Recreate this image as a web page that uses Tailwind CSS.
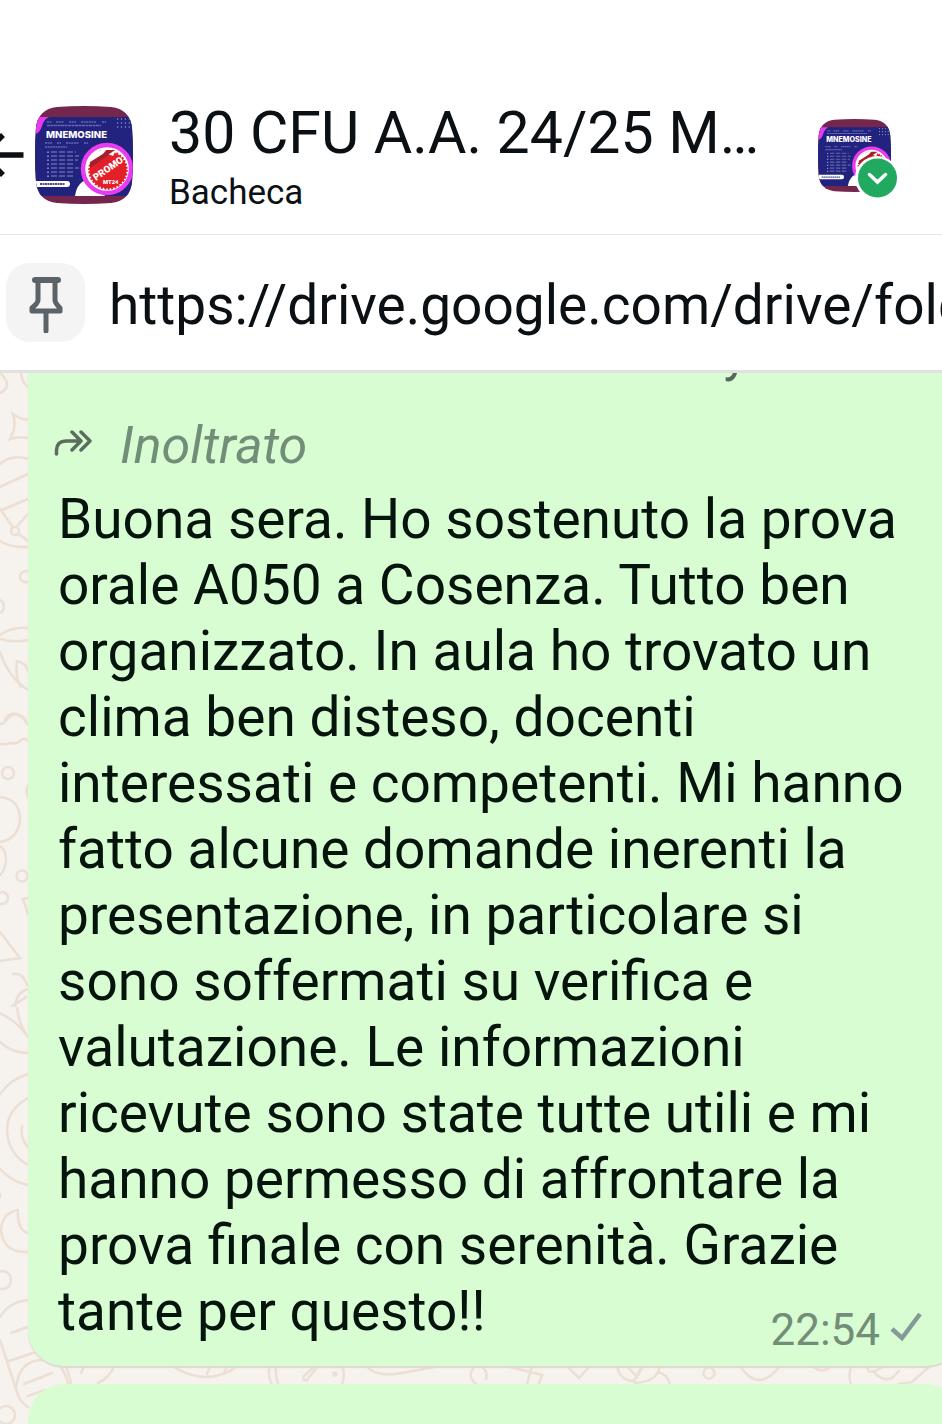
<!DOCTYPE html>
<html lang="it">
<head>
    <meta charset="UTF-8">
    <meta name="viewport" content="width=device-width, initial-scale=1.0">
    <title>30 CFU A.A. 24/25 - Bacheca</title>
    <script src="https://cdn.jsdelivr.net/npm/@tailwindcss/browser@4"></script>
</head>
<body class="min-h-screen flex flex-col overflow-x-hidden bg-white font-['Roboto',sans-serif] text-[#0b1014]">
    <!-- Shared group picture -->
    <svg class="absolute size-0" aria-hidden="true">
        <clipPath id="avatar-shape">
            <path d="M22 1Q49 -1 76 1Q95 3 97 22Q99 49 97 76Q95 95 76 97Q49 99 22 97Q3 95 1 76Q-1 49 1 22Q3 3 22 1Z"/>
        </clipPath>
        <symbol id="group-avatar" viewBox="0 0 98 98">
            <g clip-path="url(#avatar-shape)">
                <rect width="98" height="98" fill="#75264d"/>
                <rect y="11" width="98" height="79" fill="#22237f"/>
                <path d="M0 11H14Q9 13 7 20Q5 27 0 28Z" fill="#e63af0"/>
                <g fill="none" stroke="#6468ab" stroke-width="1.600">
                    <path d="M12 16H17M21 16H29M34 16H41M46 16H61M67 16H71" stroke-dasharray="2 .6"/>
                    <path d="M12 19.500H66" stroke-dasharray="3 .5"/>
                    <path d="M10 37H17M22 37H26M31 37H44M49 37H53M10 41H32" stroke-dasharray="2 .6"/>
                    <path d="M16 46H41M16 50H44M16 54H43M16 58H39M16 62H44M16 66H39M16 70H38" stroke-dasharray="6 2"/>
                </g>
                <path d="M13 45.500V71" stroke="#9da0d4" stroke-width="1.500" stroke-dasharray="1.500 2.500"/>
                <path d="M82 13H95M82 17H95M82 21H95" stroke="#b6b8e0" stroke-width="1.200" stroke-dasharray="1.200 2.700"/>
                <text x="11" y="31.500" font-size="9.600" font-weight="800" fill="#fff" font-family="Inter, sans-serif">MNEMOSINE</text>
                <path d="M40 90Q42 75 55 73L70 90Z" fill="#fff"/>
                <rect x="-4" y="75" width="39" height="6" rx="3" fill="#fff"/>
                <path d="M5 78H30" stroke="#4a4c80" stroke-width="1.800" stroke-dasharray="2 .5"/>
                <circle cx="72" cy="63" r="24" fill="#fff" stroke="#e83cf0" stroke-width="4.500"/>
                <circle cx="73" cy="64" r="18.500" fill="#e31f29" stroke="#e31f29" stroke-width="2.500" stroke-dasharray="2 1.400"/>
                <path d="M55 56Q57 48 66 44L80 44L76 48L55 62Z" fill="#b0222c"/>
                <path d="M54 53Q60 44 72 43L68 48L55 56Z M73 48L81 44L78 50Z" fill="#fff"/>
                <path d="M55 57L74 44L77 46L56 61Z" fill="#a5202c"/>
                <text x="61" y="75" font-size="9.600" font-weight="900" fill="#fff" transform="rotate(-35 61 75)">PROMO</text>
                <text x="68" y="78" font-size="5.800" font-weight="900" fill="#fff">MT24</text>
            </g>
        </symbol>
    </svg>

    <header class="flex items-center pt-19 h-[235px] border-b border-[#e6e6e6]">
        <button class="shrink-0 w-[35px]" aria-label="Indietro">
            <svg class="w-[35px] h-14" viewBox="0 0 35 56" fill="none" stroke="#0b1014" stroke-width="5.500">
                <path d="M-18 28H23.500M3 8L-17 28L3 48"/>
            </svg>
        </button>
        <svg class="shrink-0 size-[98px]" role="img" aria-label="Immagine del gruppo"><use href="#group-avatar"/></svg>
        <div class="flex-1 min-w-0 pt-2 pl-9 pr-12">
            <h1 class="text-[59px] leading-17 truncate">30 CFU A.A. 24/25 Mnemosine</h1>
            <p class="text-[35px] leading-13">Bacheca</p>
        </div>
        <button class="relative shrink-0 size-[73px] mr-[51px]" aria-label="Cambia gruppo">
            <svg class="size-[73px]" aria-hidden="true"><use href="#group-avatar"/></svg>
            <svg class="absolute -right-2 -bottom-2 size-11" viewBox="0 0 44 44" aria-hidden="true">
                <circle cx="22" cy="22" r="22" fill="#fff"/>
                <circle cx="22.500" cy="22" r="19.500" fill="#22a960"/>
                <path d="M14.500 18.500L22.500 26L30.500 18.500" fill="none" stroke="#fff" stroke-width="3.500" stroke-linecap="round"/>
            </svg>
        </button>
    </header>

    <section class="flex items-center h-[138px] pl-1.5 gap-6 border-b-3 border-[#e1e2e0] overflow-hidden" aria-label="Messaggio fissato">
        <div class="shrink-0 size-[79px] rounded-3xl bg-[#f5f4f4] flex items-center justify-center">
            <svg class="w-9 h-15" viewBox="0 0 36 60" fill="none" stroke="#5b6368" stroke-width="5" stroke-linecap="round" stroke-linejoin="round" aria-hidden="true">
                <path d="M7 7H30" stroke-width="6"/>
                <path d="M10 7V27Q10 30 4 35V38H32V35Q27 30 27 27V7M18 39V58"/>
            </svg>
        </div>
        <a href="https://drive.google.com/drive/folders" class="pt-1 text-[55px] leading-16 whitespace-nowrap">https://drive.google.com/drive/folders</a>
    </section>

    <main class="relative flex-1 overflow-hidden bg-[#f6f2ed]">
        <!-- Doodle wallpaper -->
        <svg class="absolute top-0 left-0 w-[942px] h-[1051px]" viewBox="0 373 942 1051" fill="none" stroke="#ecdfd4" stroke-width="2.500" stroke-linecap="round" aria-hidden="true">
            <path d="M0 373Q8 380 7 386Q5 391 0 393M21 373Q22 383 28 387M12 413Q22 421 28 419M12 413Q18 424 10 439Q19 436 28 438"/>
            <path d="M0 464Q12 454 28 459M0 487L28 474M2 510L28 499M0 509L12 526M18 525L28 514M20 535L28 541M0 541Q12 548 28 547"/>
            <circle cx="15" cy="531" r="4"/>
            <path d="M28 571Q20 571 20 577Q21 583 28 582M0 600Q4 602 4 607Q3 612 0 613"/>
            <path d="M0 635Q12 626 28 628M0 639Q13 643 28 640M0 652Q8 677 28 690M17 661Q15 678 21 687M17 661Q26 663 28 671M5 720Q9 712 17 714Q24 716 26 721"/>
            <path d="M0 724Q5 724 7 719Q14 712 20 716Q25 719 27 724M0 744Q5 745 10 743Q18 744 21 740Q25 737 28 741"/>
            <circle cx="8" cy="773" r="6"/>
            <path d="M28 785Q25 791 28 797M0 797Q20 799 20 820Q18 839 0 842M0 846Q6 850 6 860Q5 871 0 875"/>
            <circle cx="22" cy="876" r="5.500"/>
            <circle cx="2" cy="898" r="6"/>
            <path d="M28 914L23 899L28 898M0 932L20 958L0 961M13 974Q23 972 27 985M28 989Q17 992 15 1006M12 1006Q22 1000 26 997M17 1008Q19 1025 28 1037M0 1013Q18 1022 28 1037M0 1042Q12 1053 28 1053"/>
            <path d="M28 1074Q11 1079 0 1094M28 1098Q7 1110 7 1130Q8 1154 28 1165M22 1126Q20 1139 28 1147M0 1169Q12 1182 28 1185M0 1194V1197"/>
            <path d="M18 1210Q2 1213 1 1230Q3 1253 28 1252M18 1210Q17 1230 28 1233"/>
            <path d="M0 1271Q11 1271 11 1280Q10 1290 0 1289M0 1317Q9 1302 28 1300M11 1333L28 1327M0 1340L16 1389Q19 1402 28 1407M9 1361L36 1352M16 1387Q20 1360 42 1360M24 1384L52 1373M28 1396L45 1390"/>
            <circle cx="6" cy="1415" r="9"/>
            <path d="M57 1363Q66 1372 68 1384M64 1363Q69 1372 71 1384M81 1373L85 1364M98 1383Q110 1378 115 1364M172 1366Q207 1388 238 1366M207 1374L210 1366M224 1373L227 1366M270 1366Q267 1376 272 1384M276 1366Q275 1376 278 1384M342 1384Q346 1375 342 1366M316 1365L304 1376Q302 1382 307 1380L318 1366"/>
            <circle cx="335" cy="1374" r="1.500"/>
            <path d="M366 1366Q377 1378 402 1373L440 1366M475 1366Q466 1376 476 1384M480 1366Q489 1371 486 1379M510 1367L542 1375L539 1384M532 1366L527 1384M569 1368L579 1378L590 1366M617 1366Q620 1381 634 1381L642 1366M627 1366L637 1377L643 1366M635 1383Q653 1382 658 1372L660 1366M658 1372Q668 1375 670 1384"/>
            <circle cx="709" cy="1373" r="5.500"/>
            <path d="M740 1366Q758 1394 780 1366M814 1367Q822 1374 830 1367M851 1366Q848 1376 851 1384M867 1366Q868 1374 875 1371L885 1366M874 1372Q882 1382 892 1378L899 1371M899 1384L912 1382L930 1366"/>
        </svg>

        <div class="relative flex flex-col gap-[18px] ml-7 -mr-5">
            <article class="rounded-b-[36px] bg-[#d8fdd2] shadow-[0_2px_1px_#e0d9d2] pl-[30px] pr-11 pb-[22px]">
                <div class="h-[43px] overflow-hidden flex justify-end pr-[170px]">
                    <p class="-mt-[46px] text-[52px] leading-none text-[#56695a]">y</p>
                </div>
                <p class="flex items-center gap-6.5 text-[52px] leading-15 italic text-[#728d78]">
                    <svg class="-ml-1 w-10 h-8" viewBox="0 0 40 32" fill="none" stroke="#5b6c61" stroke-width="3.500" stroke-linecap="round" stroke-linejoin="round" aria-hidden="true">
                        <path d="M2.500 24V20Q3 11 12 11H26M18 2L27 11L18 20M27 2L36 11L27 20"/>
                    </svg>
                    Inoltrato
                </p>
                <div class="grid pt-2.5">
                    <p class="col-start-1 row-start-1 text-[55px] leading-[66px] text-[#05140c]">Buona sera. Ho sostenuto la prova orale A050 a Cosenza. Tutto ben organizzato. In aula ho trovato un clima ben disteso, docenti interessati e competenti. Mi hanno fatto alcune domande inerenti la presentazione, in particolare si sono soffermati su verifica e valutazione. Le informazioni ricevute sono state tutte utili e mi hanno permesso di affrontare la prova finale con serenità. Grazie tante per questo!!</p>
                    <div class="col-start-1 row-start-1 self-end justify-self-end flex items-center gap-2.5 -mr-1 -mb-3 text-[44px] leading-13 text-[#728d78]">
                        <time datetime="22:54">22:54</time>
                        <svg class="w-8 h-10" viewBox="0 0 32 40" fill="none" stroke="#859a98" stroke-width="4.500" aria-label="Inviato" role="img">
                            <path d="M2 19L12 28L30 4"/>
                        </svg>
                    </div>
                </div>
            </article>
            <article class="h-28 -mb-18 rounded-t-[36px] bg-[#d8fdd2]" aria-label="Messaggio successivo"></article>
        </div>
    </main>
</body>
</html>
